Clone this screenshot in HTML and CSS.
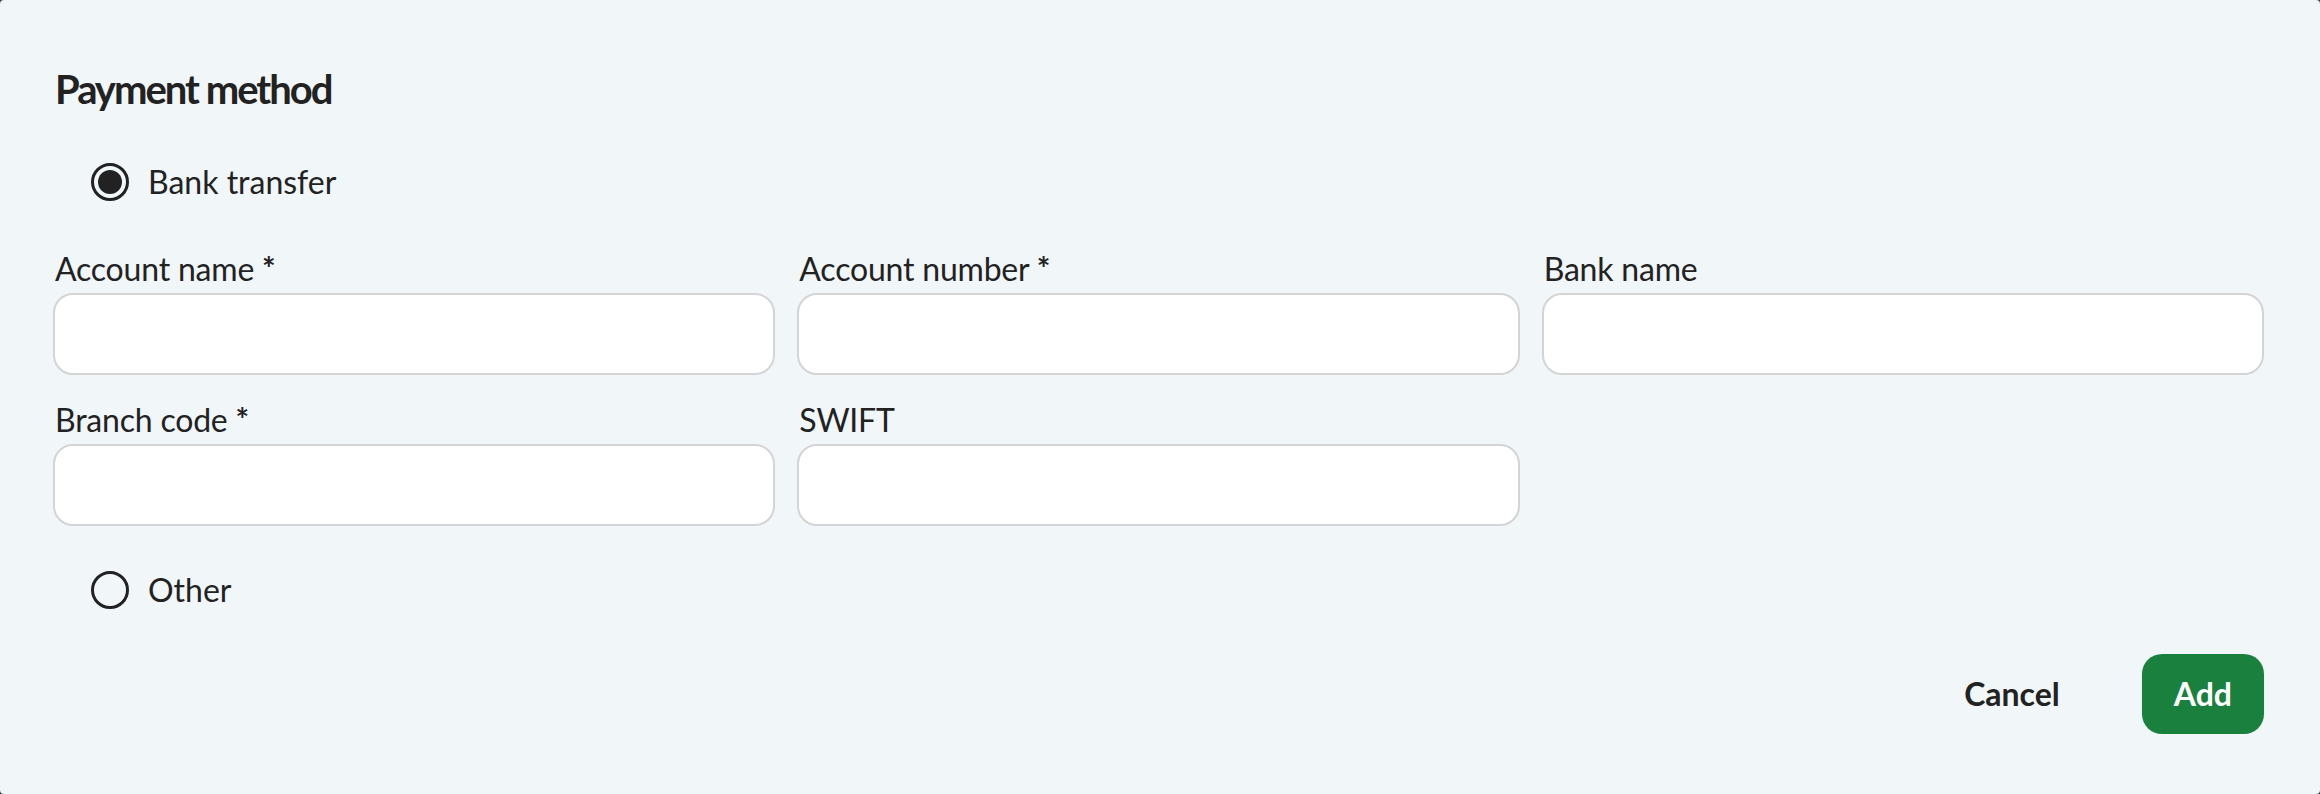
FILE: index.html
```html
<!DOCTYPE html>
<html lang="en">
<head>
<meta charset="utf-8">
<title>Payment method</title>
<link rel="stylesheet" href="styles.css">
</head>
<body>
<div class="dialog">
  <h2 class="title">Payment method</h2>

  <label class="radio">
    <span class="radio-mark checked"></span>
    <span class="radio-text">Bank transfer</span>
  </label>

  <div class="fields">
    <div class="field">
      <span class="label">Account name <span class="req">*</span></span>
      <div class="input"></div>
    </div>
    <div class="field">
      <span class="label">Account number <span class="req">*</span></span>
      <div class="input"></div>
    </div>
    <div class="field">
      <span class="label">Bank name</span>
      <div class="input"></div>
    </div>
    <div class="field">
      <span class="label">Branch code <span class="req">*</span></span>
      <div class="input"></div>
    </div>
    <div class="field">
      <span class="label">SWIFT</span>
      <div class="input"></div>
    </div>
  </div>

  <label class="radio radio-other">
    <span class="radio-mark"></span>
    <span class="radio-text">Other</span>
  </label>

  <div class="actions">
    <button class="btn btn-cancel">Cancel</button>
    <button class="btn btn-add">Add</button>
  </div>
</div>
</body>
</html>
```

FILE: styles.css
```css
html, body {
  margin: 0;
  padding: 0;
  background: #3a3a3a;
}

body {
  font-family: Lato, "Open Sans", "Liberation Sans", sans-serif;
  color: #222222;
}

.dialog {
  box-sizing: border-box;
  width: 2320px;
  height: 794px;
  background: #f1f6f9;
  border-radius: 4px;
  padding: 65px 56px 0 53px;
  display: flex;
  flex-direction: column;
}

.title {
  margin: 0;
  font-size: 40px;
  line-height: 48px;
  font-weight: 700;
  letter-spacing: -2px;
  padding-left: 2px;
  color: #222222;
}

.radio {
  display: flex;
  align-items: center;
  gap: 19px;
  height: 38px;
  margin: 50px 0 0 38px;
  font-size: 32px;
}

.radio-mark {
  box-sizing: border-box;
  width: 38px;
  height: 38px;
  border: 3px solid #222222;
  border-radius: 50%;
  display: flex;
  align-items: center;
  justify-content: center;
  flex: none;
}

.radio-mark.checked::after {
  content: "";
  width: 24px;
  height: 24px;
  border-radius: 50%;
  background: #222222;
}

.radio-text {
  line-height: 38px;
}

.fields {
  margin-top: 49px;
  display: grid;
  grid-template-columns: repeat(3, 1fr);
  column-gap: 22px;
  row-gap: 26px;
}

.field {
  display: flex;
  flex-direction: column;
}

.label {
  font-size: 32px;
  line-height: 38px;
  padding-left: 2px;
  margin-bottom: 5px;
  letter-spacing: -0.2px;
}

.req {
  font-weight: 700;
}

.input {
  box-sizing: border-box;
  height: 82px;
  background: #ffffff;
  border: 2px solid #d4d4d4;
  border-radius: 20px;
}

.radio-other {
  margin-top: 45px;
}

.actions {
  margin-top: 45px;
  display: flex;
  justify-content: flex-end;
  gap: 50px;
}

.btn {
  font-family: Lato, "Open Sans", "Liberation Sans", sans-serif;
  font-size: 32px;
  font-weight: 700;
  height: 80px;
  line-height: 80px;
  padding: 0 32px;
  border: none;
  border-radius: 20px;
  background: transparent;
  color: #222222;
}

.btn-add {
  background: #1a803e;
  color: #ffffff;
}
```
